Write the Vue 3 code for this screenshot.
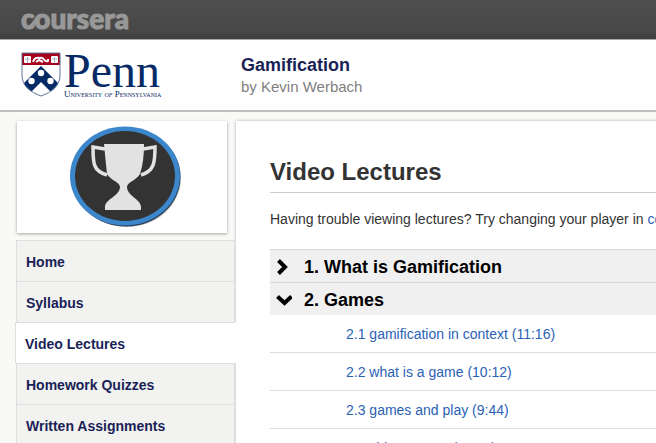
<script setup>
const navItems = [
  { label: 'Home', active: false },
  { label: 'Syllabus', active: false },
  { label: 'Video Lectures', active: true },
  { label: 'Homework Quizzes', active: false },
  { label: 'Written Assignments', active: false }
]

const sections = [
  { title: '1. What is Gamification', open: false, lectures: [] },
  {
    title: '2. Games',
    open: true,
    lectures: [
      '2.1 gamification in context (11:16)',
      '2.2 what is a game (10:12)',
      '2.3 games and play (9:44)',
      '2.4 video games (11:19)'
    ]
  }
]
</script>

<template>
  <div class="page">
    <header class="topbar">
      <a class="brand" href="#">coursera<svg class="brand-link" viewBox="0 0 30 18" aria-hidden="true">
        <path d="M8 15C13 15 15 4 21 4" />
      </svg></a>
    </header>

    <div class="course">
      <a class="school" href="#">
        <svg class="shield" viewBox="0 0 40 45" aria-hidden="true">
          <defs>
            <clipPath id="shield-shape">
              <path d="M1 1H39V23C39 34 31 40 20 44C9 40 1 34 1 23Z" />
            </clipPath>
          </defs>
          <g clip-path="url(#shield-shape)">
            <rect width="40" height="45" fill="#fff" />
            <rect width="40" height="13" fill="#a5001e" />
            <path d="M20 14L44 38L35 45L20 30L5 45L-4 38Z" fill="#062a66" />
            <g fill="#fff">
              <circle cx="20" cy="21" r="3.2" />
              <circle cx="10.500" cy="29" r="3.2" />
              <circle cx="29.500" cy="29" r="3.2" />
              <rect x="3" y="4" width="7" height="7" rx="1" />
              <rect x="30" y="4" width="7" height="7" rx="1" />
            </g>
            <path d="M12 10C13 6 16 5 19 6C23 4 23 11 27 9L27 7M15 10L18 8L22 10" fill="none" stroke="#fff" stroke-width="2" />
            <path d="M4 7H9M31 7H36M6.500 5V11M33.500 5V11" stroke="#a9b2c8" stroke-width="1" />
          </g>
          <path d="M1 1H39V23C39 34 31 40 20 44C9 40 1 34 1 23Z" fill="none" stroke="#62759b" />
        </svg>
        <span class="school-text">
          <span class="school-name">Penn</span>
          <span class="school-full">University <i>of</i> Pennsylvania</span>
        </span>
      </a>
      <div>
        <h1 class="course-title">Gamification</h1>
        <p class="course-author">by Kevin Werbach</p>
      </div>
    </div>

    <div class="body">
      <aside class="sidebar">
        <div class="badge-card">
          <svg class="badge" viewBox="0 0 114 104" role="img" aria-label="Gamification trophy">
            <ellipse cx="58" cy="53" rx="54" ry="49" fill="#222" opacity=".25" />
            <ellipse cx="57" cy="52" rx="54.500" ry="49.500" fill="#243a50" />
            <ellipse cx="56" cy="51" rx="55" ry="49.500" fill="#3c86cc" />
            <ellipse cx="56" cy="51" rx="50" ry="45" fill="#333" />
            <path d="M36 24L24 22C24 38 24 46 38 50M74 24L86 22C86 38 85 46 72 50" fill="none" stroke="#e2e2e2" stroke-width="3.500" />
            <path d="M35 19H75C75 30 74 40 71 49C68 55 58 57 58 62C58 71 72 74 72 82V85H36V82C36 74 51 71 51 62C51 57 41 55 38 49C37 40 36 30 35 19Z" fill="#e2e2e2" />
          </svg>
        </div>
        <nav class="nav">
          <a v-for="item in navItems" :key="item.label" href="#" class="nav-item" :class="{ active: item.active }">{{ item.label }}</a>
        </nav>
      </aside>

      <main class="content">
        <h2 class="heading">Video Lectures</h2>
        <p class="help">Having trouble viewing lectures? Try changing your player in <a href="#">course preferences</a></p>
        <section v-for="section in sections" :key="section.title">
          <h3 class="section-title">
            <button type="button" class="toggle" :aria-expanded="section.open">
              <svg class="chevron" viewBox="0 0 16 16" aria-hidden="true">
                <path :d="section.open ? 'M1.500 4.500L8.500 11L15.500 4.500' : 'M2.500 1.500L9 8L2.500 14.500'" />
              </svg>
              {{ section.title }}
            </button>
          </h3>
          <ul v-if="section.open" class="lectures">
            <li v-for="lecture in section.lectures" :key="lecture"><a href="#">{{ lecture }}</a></li>
          </ul>
        </section>
      </main>
    </div>
  </div>
</template>

<style>
body {
  margin: 0;
  background: #f9f9f7;
}
html {
  overflow: hidden;
}
</style>

<style scoped>
.page {
  height: 100vh;
  display: flex;
  flex-direction: column;
  overflow: hidden;
  font-family: "Liberation Sans", Arial, sans-serif;
  font-size: 14px;
  color: #333;
}
h1, h2, h3, p, ul {
  margin: 0;
  padding: 0;
}
a {
  color: #2a62b5;
  text-decoration: none;
}
.topbar {
  flex: none;
  box-sizing: border-box;
  height: 40px;
  padding: 4px 21px;
  border-bottom: 1px solid #aaa;
  background: linear-gradient(#4e4e4e, #484848 80%, #3e3e3e);
}
.brand {
  position: relative;
  display: inline-block;
  font: 900 28px/28px Lato, sans-serif;
  color: #989898;
  -webkit-text-stroke: 1px #989898;
}
.brand-link {
  position: absolute;
  left: 0;
  top: 8px;
  width: 30px;
  height: 18px;
}
.brand-link path {
  fill: none;
  stroke: #989898;
  stroke-width: 4;
}
.course {
  flex: none;
  box-sizing: border-box;
  height: 72px;
  padding: 12px 21px;
  display: grid;
  grid-template-columns: 220px 1fr;
  background: #fff;
  border-bottom: 2px solid #c0c0c4;
}
.school {
  display: flex;
  gap: 3px;
  color: #062a66;
}
.shield {
  width: 40px;
  height: 45px;
}
.school-text {
  display: flex;
  flex-direction: column;
  font-family: "Liberation Serif", serif;
  white-space: nowrap;
}
.school-name {
  font-size: 48px;
  line-height: 37px;
}
.school-full {
  font-size: 9px;
  line-height: 10px;
  font-variant: small-caps;
}
.course-title {
  font-size: 18px;
  line-height: 26px;
  color: #1a1f57;
}
.course-author {
  font-size: 15px;
  line-height: 18px;
  color: #808080;
}
.body {
  flex: 1;
  min-height: 0;
  display: grid;
  grid-template-columns: 220px 1fr;
  padding: 9px 0 0 16px;
}
.sidebar {
  position: relative;
  z-index: 1;
}
.badge-card {
  display: flex;
  justify-content: center;
  margin: 0 9px 7px 1px;
  padding: 4px 0 4px 8px;
  background: #fff;
  box-shadow: 0 1px 3px rgba(0, 0, 0, 0.35);
}
.badge {
  width: 114px;
  height: 104px;
}
.nav {
  border-left: 1px solid #ddd;
}
.nav-item {
  display: block;
  box-sizing: border-box;
  height: 41px;
  padding: 0 9px;
  border-top: 1px solid #dedede;
  border-right: 2px solid #dedede;
  background: #f2f2f0;
  font-size: 14px;
  font-weight: bold;
  line-height: 42px;
  color: #1a1f57;
}
.nav-item.active {
  margin-left: -2px;
  border-left: 1px solid #dedede;
  border-right-color: #fff;
  background: #fff;
}
.content {
  padding: 34px 0 0 34px;
  background: #fff;
  box-shadow: 0 0 3px rgba(0, 0, 0, 0.3);
}
.heading {
  padding-bottom: 4px;
  border-bottom: 1px solid #ccc;
  font-size: 24px;
  line-height: 33px;
}
.help {
  padding: 16px 0 20px;
  line-height: 20px;
  white-space: nowrap;
}
.section-title {
  border-top: 1px solid #d8d8d8;
  background: #f0f0f0;
}
.toggle {
  display: flex;
  align-items: center;
  gap: 12px;
  width: 100%;
  height: 32px;
  padding: 2px 6px 0;
  border: 0;
  background: none;
  font: bold 18px/30px "Liberation Sans", Arial, sans-serif;
  color: #000;
}
.chevron {
  width: 16px;
  height: 16px;
}
.chevron path {
  fill: none;
  stroke: #000;
  stroke-width: 4;
}
.lectures {
  list-style: none;
}
.lectures li {
  padding: 2px 0 0 76px;
  border-bottom: 1px solid #ddd;
  line-height: 35px;
}
</style>
